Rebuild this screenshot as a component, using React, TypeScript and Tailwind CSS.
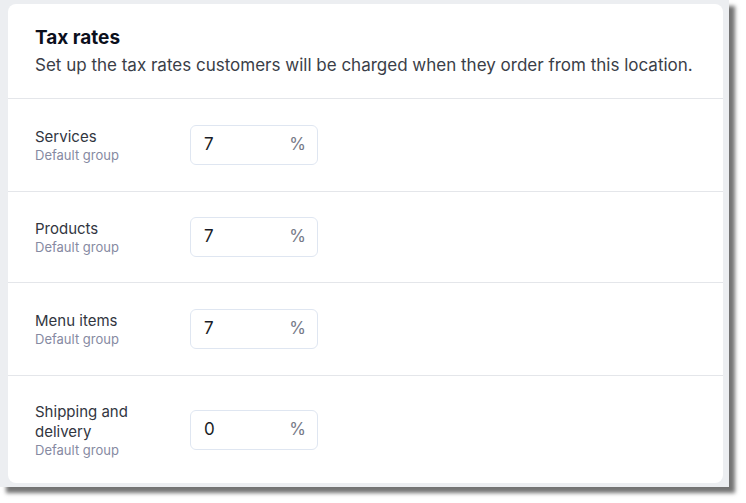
const rates = [
  { label: "Services", value: "7", pad: "py-[26px]" },
  { label: "Products", value: "7", pad: "py-[25px]" },
  { label: "Menu items", value: "7", pad: "py-[26px]" },
  { label: "Shipping and delivery", value: "0", pad: "py-[26px]" },
];

const TaxRow = ({ label, value, pad, last }: { label: string; value: string; pad: string; last?: boolean }) => {
  return (
    <div className={`flex items-center px-[27px] ${pad} ${last ? "" : "border-b border-[#e4e6ea]"}`}>
      <div className="w-[128px] shrink-0">
        <div className="text-[15px] leading-[20px] text-[#32363f]">{label}</div>
        <div className="text-[13px] leading-[16px] text-[#868aa2]">Default group</div>
      </div>
      <div className="ml-[27px] flex h-[40px] w-[128px] items-center rounded-[6px] border border-[#dfe6f1] pl-[13px] pr-[11px]">
        <span className="flex-1 text-[17px] text-[#1a1d26]">{value}</span>
        <span className="text-[17px] text-[#767a88]">%</span>
      </div>
    </div>
  );
};

const App = () => {
  return (
    <div className="h-[503px] w-[746px] bg-white font-['Inter',sans-serif]">
      <div className="h-[487px] w-[729px] bg-[#eceef1] pl-[8px] pr-[6px] pt-[4px] pb-[4px] shadow-[6px_6px_4px_rgba(0,0,0,0.55)]">
        <div className="h-full overflow-hidden rounded-[8px] bg-white">
          <div className="border-b border-[#e4e6ea] px-[27px] pt-[22px] pb-[21px]">
            <div className="text-[19px] font-bold leading-[24px] text-[#0b0f1c]">Tax rates</div>
            <div className="mt-[3px] text-[17px] leading-[24px] text-[#3a3e48]">
              Set up the tax rates customers will be charged when they order from this location.
            </div>
          </div>
          {rates.map((r, i) => (
            <TaxRow key={r.label} label={r.label} value={r.value} pad={r.pad} last={i === rates.length - 1} />
          ))}
        </div>
      </div>
    </div>
  );
};

export default App;
